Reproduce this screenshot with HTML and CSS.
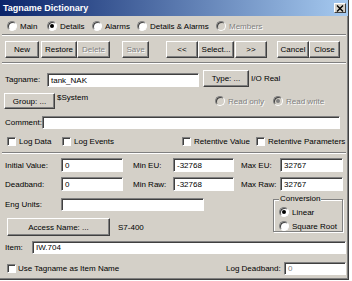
FILE: index.html
```html
<!DOCTYPE html>
<html>
<head>
<meta charset="utf-8">
<link rel="stylesheet" href="styles.css">
</head>
<body>
<div class="win">
  <div class="title">
    <span>Tagname Dictionary</span>
    <span class="xbtn"><svg width="8" height="7" viewBox="0 0 8 7"><path d="M1 0.5L7 6.5M7 0.5L1 6.5" stroke="#000" stroke-width="1.4"/></svg></span>
  </div>

  <div class="tabs">
    <label class="opt"><span class="rad"></span>Main</label>
    <label class="opt"><span class="rad on"></span>Details</label>
    <label class="opt"><span class="rad"></span>Alarms</label>
    <label class="opt"><span class="rad"></span>Details &amp; Alarms</label>
    <label class="opt dis"><span class="rad dis"></span>Members</label>
  </div>

  <div class="sep s1"></div>

  <div class="row btns">
    <span class="btn b-new">New</span>
    <span class="btn b-restore">Restore</span>
    <span class="btn b-delete dis">Delete</span>
    <span class="btn b-save dis">Save</span>
    <span class="btn b-prev">&lt;&lt;</span>
    <span class="btn b-select">Select...</span>
    <span class="btn b-next">&gt;&gt;</span>
    <span class="btn b-cancel">Cancel</span>
    <span class="btn b-close">Close</span>
  </div>

  <div class="sep s2"></div>

  <div class="row r-tag">
    <span class="lbl l-tag">Tagname:</span>
    <span class="inp i-tag">tank_NAK</span>
    <span class="btn b-type">Type: ...</span>
    <span class="txt t-io">I/O Real</span>
  </div>

  <div class="row r-group">
    <span class="btn b-group">Group: ...</span>
    <span class="txt t-sys">$System</span>
    <label class="opt dis o-ro"><span class="rad dis"></span>Read only</label>
    <label class="opt dis"><span class="rad dis on"></span>Read write</label>
  </div>

  <div class="row r-comment">
    <span class="lbl l-comment">Comment:</span>
    <span class="inp i-comment"></span>
  </div>

  <div class="row r-checks">
    <label class="opt c1"><span class="chk"></span>Log Data</label>
    <label class="opt c2"><span class="chk"></span>Log Events</label>
    <label class="opt c3"><span class="chk"></span>Retentive Value</label>
    <label class="opt"><span class="chk"></span>Retentive Parameters</label>
  </div>

  <div class="sep s3"></div>

  <div class="row r-init">
    <span class="lbl l-a">Initial Value:</span>
    <span class="inp i-a">0</span>
    <span class="lbl l-b">Min EU:</span>
    <span class="inp i-b">-32768</span>
    <span class="lbl l-c">Max EU:</span>
    <span class="inp i-c">32767</span>
  </div>

  <div class="row r-dead">
    <span class="lbl l-a">Deadband:</span>
    <span class="inp i-a">0</span>
    <span class="lbl l-b">Min Raw:</span>
    <span class="inp i-b">-32768</span>
    <span class="lbl l-c">Max Raw:</span>
    <span class="inp i-c">32767</span>
  </div>

  <div class="lower">
    <div class="lcol">
      <div class="row r-eng">
        <span class="lbl l-a">Eng Units:</span>
        <span class="inp i-eng"></span>
      </div>
      <div class="row r-access">
        <span class="btn b-access">Access Name: ...</span>
        <span class="txt t-s7">S7-400</span>
      </div>
    </div>
    <div class="conv">
      <span class="conv-title">Conversion</span>
      <label class="opt cv1"><span class="rad on"></span>Linear</label>
      <label class="opt cv2"><span class="rad"></span>Square Root</label>
    </div>
  </div>

  <div class="row r-item">
    <span class="lbl l-item">Item:</span>
    <span class="inp i-item">IW.704</span>
  </div>

  <div class="row r-last">
    <label class="opt o-use"><span class="chk"></span>Use Tagname as Item Name</label>
    <span class="lbl l-ld">Log Deadband:</span>
    <span class="inp i-ld dim">0</span>
  </div>
</div>
</body>
</html>
```

FILE: styles.css
```css
* { box-sizing: border-box; }
body {
  margin: 0;
  background: #fff;
  font-family: "Liberation Sans", Arial, sans-serif;
  font-size: 8px;
  color: #000;
}
.win {
  width: 349px;
  height: 280px;
  background: #d4d0c8;
  border-right: 1px solid #404040;
  border-bottom: 1px solid #404040;
  box-shadow: inset -1px -1px #808080;
  overflow: hidden;
}
.title {
  height: 16px;
  background: linear-gradient(to right, #0a246a, #a6caf0);
  display: flex;
  align-items: center;
  justify-content: space-between;
  padding: 0 2px 0 3px;
  color: #fff;
  font-weight: bold;
  font-size: 9px;
}
.xbtn {
  width: 12px;
  height: 10px;
  background: #d4d0c8;
  border: 1px solid;
  border-color: #fff #404040 #404040 #fff;
  display: flex;
  align-items: center;
  justify-content: center;
}
.row { display: flex; align-items: center; }
.opt { display: flex; align-items: center; gap: 3px; white-space: nowrap; }
.opt.dis, .btn.dis { color: #808080; text-shadow: 1px 1px 0 #fff; }
.rad {
  width: 10px; height: 10px; flex: none;
  border-radius: 50%;
  background: #fff;
  border: 1px solid;
  border-color: #808080 #fff #fff #808080;
  box-shadow: inset 1px 1px #404040;
  display: inline-flex; align-items: center; justify-content: center;
}
.rad.on::after {
  content: ""; width: 4px; height: 4px; border-radius: 50%; background: #000;
}
.rad.dis { background: #d4d0c8; }
.rad.dis.on::after { background: #808080; }
.chk {
  width: 9px; height: 9px; flex: none;
  background: #fff;
  border: 1px solid;
  border-color: #808080 #fff #fff #808080;
  box-shadow: inset 1px 1px #404040;
}
.btn {
  height: 17px; flex: none;
  display: flex; align-items: center; justify-content: center;
  background: #d4d0c8;
  border: 1px solid;
  border-color: #fff #404040 #404040 #fff;
  box-shadow: inset -1px -1px #808080;
  white-space: nowrap;
}
.inp {
  height: 14px; flex: none;
  background: #fff;
  border: 1px solid;
  border-color: #808080 #fff #fff #808080;
  box-shadow: inset 1px 1px #404040;
  padding-left: 3px;
  display: flex; align-items: center;
  white-space: nowrap;
}
.inp.dim { color: #808080; }
.lbl, .txt { flex: none; white-space: nowrap; }
.sep {
  height: 2px;
  border-top: 1px solid #808080;
  border-bottom: 1px solid #fff;
  margin-left: 2px;
  margin-right: 2px;
}

/* radio tabs */
.tabs {
  display: grid;
  grid-template-columns: 40px 45px 45px 79px auto;
  margin: 4px 0 0 7px;
  height: 12px;
  align-items: center;
}
.s1 { margin-top: 2px; }

/* button bar */
.btns { margin-top: 5px; height: 17px; }
.b-new { margin-left: 5px; width: 34px; }
.b-restore { margin-left: 2px; width: 36px; }
.b-delete { width: 33px; }
.b-save { margin-left: 12px; width: 27px; }
.b-prev { margin-left: 17px; width: 32px; }
.b-select { width: 36px; }
.b-next { margin-left: 1px; width: 32px; }
.b-cancel { margin-left: 10px; width: 32px; }
.b-close { width: 31px; }
.s2 { margin-top: 4px; }

/* tagname */
.r-tag { margin-top: 6px; height: 17px; }
.l-tag { margin-left: 5px; width: 42px; margin-top: 2px; }
.i-tag { width: 152px; margin-top: 3px; }
.b-type { margin-left: 4px; width: 46px; }
.t-io { margin-left: 2px; }

/* group */
.r-group { margin-top: 6px; height: 16px; }
.b-group { margin-left: 4px; width: 51px; height: 16px; }
.t-sys { margin-left: 2px; width: 158px; align-self: flex-start; line-height: 10px; }
.o-ro { width: 58px; }

/* comment */
.r-comment { margin-top: 7px; height: 13px; }
.l-comment { margin-left: 5px; width: 37px; }
.i-comment { width: 298px; height: 13px; }

/* checks */
.r-checks { margin-top: 7px; height: 10px; }
.c1 { margin-left: 7px; width: 55px; }
.c2 { width: 120px; }
.c3 { width: 74px; }
.s3 { margin-top: 6px; }

/* value grid */
.r-init { margin-top: 4px; height: 14px; }
.r-dead { margin-top: 5px; height: 14px; }
.l-a { margin-left: 5px; width: 56px; }
.i-a { width: 62px; }
.l-b { margin-left: 10px; width: 40px; }
.i-b { width: 61px; }
.l-c { margin-left: 7px; width: 39px; }
.i-c { width: 63px; }

/* lower section */
.lower { display: flex; margin-top: 2px; height: 43px; }
.lcol { width: 273px; padding-top: 5px; }
.r-eng { height: 13px; }
.i-eng { width: 143px; height: 13px; }
.r-access { margin-top: 7px; height: 18px; }
.b-access { margin-left: 7px; width: 103px; height: 18px; }
.t-s7 { margin-left: 8px; }
.conv {
  margin-top: 6px;
  width: 70px;
  height: 33px;
  border: 1px solid #808080;
  box-shadow: inset 1px 1px #fff, 1px 1px #fff;
  padding-left: 5px;
}
.conv-title {
  display: inline-block;
  margin-top: -7px;
  background: #d4d0c8;
  padding: 0 1px;
  line-height: 12px;
  vertical-align: top;
}
.cv1 { height: 12px; margin-top: -3px; }
.cv2 { height: 12px; margin-top: 2px; }

/* item */
.r-item { margin-top: 5px; height: 13px; }
.l-item { margin-left: 5px; width: 27px; }
.i-item { width: 314px; height: 13px; }

/* last row */
.r-last { margin-top: 7px; height: 14px; }
.o-use { margin-left: 7px; width: 219px; gap: 2px; }
.l-ld { width: 58px; }
.i-ld { width: 62px; height: 13px; }
```
